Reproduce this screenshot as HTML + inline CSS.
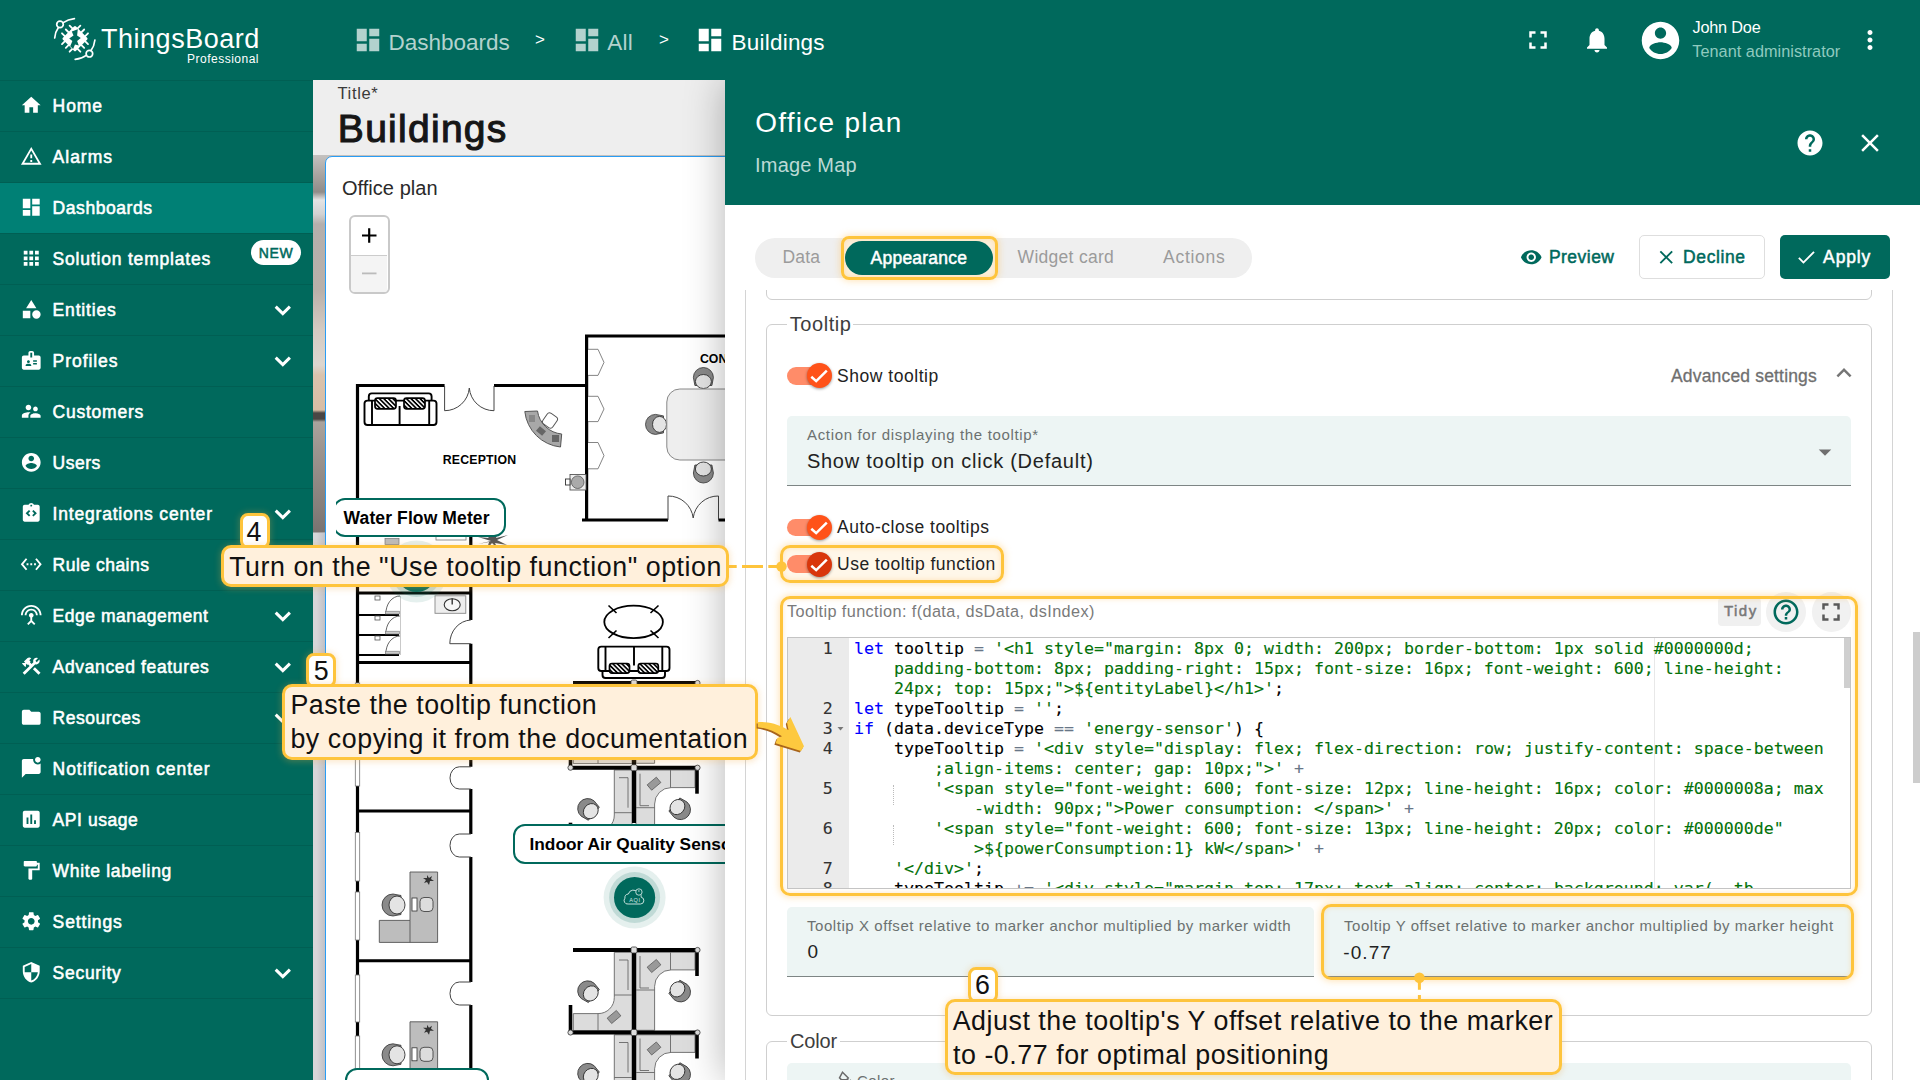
<!DOCTYPE html>
<html lang="en"><head><meta charset="utf-8"><title>ThingsBoard - Buildings</title>
<style>
*{box-sizing:border-box;margin:0;padding:0}
html,body{width:1920px;height:1080px;overflow:hidden;background:#fff;font-family:"Liberation Sans",sans-serif;color:#000}
.a{position:absolute}
.t{position:absolute;white-space:pre;display:block}
svg{position:absolute;overflow:visible}
#sidebar{left:0;top:0;width:313px;height:1080px;background:#00695c}
#topbar{left:313px;top:0;width:1607px;height:80px;background:#00695c}
.nl{left:0;width:313px;height:1px;background:#005f53}
#dash{left:313px;top:80px;width:412px;height:1000px;background:#eee;overflow:hidden}
#panel{left:725px;top:80px;width:1195px;height:1000px;background:#fff;box-shadow:0 0 38px rgba(0,0,0,.3);clip-path:inset(0 0 0 -70px)}
#phead{left:0;top:0;width:1195px;height:124.5px;background:#00695c}
.fs{border:1px solid #cfcfcf;border-radius:6px}
.field{background:#edf5f4;border-bottom:1px solid #7d8584;border-radius:5px 5px 0 0}
.hl{border:3.2px solid #fec43c;border-radius:10px;box-shadow:0 0 7px 1px rgba(254,190,85,.42), inset 0 0 5px rgba(254,190,85,.35)}
.note{background:#fff0dc;border:3.2px solid #fec43c;border-radius:10px;box-shadow:0 1px 6px 1px rgba(240,170,70,.28)}
.badge{background:#fff;border:3.2px solid #fec43c;border-radius:8px;box-shadow:0 0 6px 1px rgba(240,170,70,.28)}
.trk{height:17.5px;border-radius:9px;background:#ff8c69}
.thumb{width:25px;height:25px;border-radius:50%;background:#ff5219;box-shadow:0 1px 3px rgba(0,0,0,.4)}
.cd{-webkit-text-stroke:.12px;font-family:"DejaVu Sans Mono","Liberation Mono",monospace;font-size:16.61px;line-height:20px;color:#000}

</style></head>
<body>
<div id="sidebar" class="a">
<div class="a nl" style="top:80px"></div>
<svg class="a" style="left:20.05px;top:94.45px" width="22.5" height="22.5" viewBox="0 0 24 24" ><path fill="#fff" d="M10 20v-6h4v6h5v-8h3L12 3 2 12h3v8z"/></svg>
<span class="t " style="left:52.61px;top:96.00px;font-size:17.5px;line-height:21px;letter-spacing:0.896px;color:#fff;-webkit-text-stroke:.55px #fff;">Home</span>
<div class="a nl" style="top:131px"></div>
<svg class="a" style="left:20.05px;top:145.45px" width="22.5" height="22.5" viewBox="0 0 24 24" ><path fill="#fff" d="M12 5.99L19.53 19H4.47L12 5.99M12 2L1 21h22L12 2zm1 14h-2v2h2v-2zm0-6h-2v4h2v-4z"/></svg>
<span class="t " style="left:52.61px;top:147.00px;font-size:17.5px;line-height:21px;letter-spacing:0.984px;color:#fff;-webkit-text-stroke:.55px #fff;">Alarms</span>
<div class="a nl" style="top:182px"></div>
<div class="a" style="left:0;top:183px;width:313px;height:50px;background:#008075"></div>
<svg class="a" style="left:20.05px;top:196.45px" width="22.5" height="22.5" viewBox="0 0 24 24" ><path fill="#fff" d="M3 13h8V3H3v10zm0 8h8v-6H3v6zm10 0h8V11h-8v10zm0-18v6h8V3h-8z"/></svg>
<span class="t " style="left:52.61px;top:198.00px;font-size:17.5px;line-height:21px;letter-spacing:0.556px;color:#fff;-webkit-text-stroke:.55px #fff;">Dashboards</span>
<div class="a nl" style="top:233px"></div>
<svg class="a" style="left:20.05px;top:247.45px" width="22.5" height="22.5" viewBox="0 0 24 24" ><path fill="#fff" d="M4 8h4V4H4v4zm6 12h4v-4h-4v4zm-6 0h4v-4H4v4zm0-6h4v-4H4v4zm6 0h4v-4h-4v4zm6-10v4h4V4h-4zm-6 4h4V4h-4v4zm6 6h4v-4h-4v4zm0 6h4v-4h-4v4z"/></svg>
<span class="t " style="left:52.61px;top:249.00px;font-size:17.5px;line-height:21px;letter-spacing:0.805px;color:#fff;-webkit-text-stroke:.55px #fff;">Solution templates</span>
<div class="a nl" style="top:284px"></div>
<svg class="a" style="left:20.05px;top:298.45px" width="22.5" height="22.5" viewBox="0 0 24 24" ><path fill="#fff" d="M12 2l-5.5 9h11zM17.5 13a4.5 4.5 0 1 0 0 9 4.5 4.5 0 0 0 0-9zM3 13.5h8v8H3z"/></svg>
<span class="t " style="left:52.61px;top:300.00px;font-size:17.5px;line-height:21px;letter-spacing:0.826px;color:#fff;-webkit-text-stroke:.55px #fff;">Entities</span>
<svg class="a" style="left:270px;top:300.5px" width="26" height="20" viewBox="0 0 26 20"><path d="M5.7 5.6l7.1 7 7.1-7" fill="none" stroke="#fff" stroke-width="3"/></svg>
<div class="a nl" style="top:335px"></div>
<svg class="a" style="left:20.05px;top:349.45px" width="22.5" height="22.5" viewBox="0 0 24 24" ><path fill="#fff" d="M20 7h-5V4c0-1.1-.9-2-2-2h-2c-1.1 0-2 .9-2 2v3H4c-1.1 0-2 .9-2 2v11c0 1.1.9 2 2 2h16c1.1 0 2-.9 2-2V9c0-1.1-.9-2-2-2zM9 12c.83 0 1.5.67 1.5 1.5S9.83 15 9 15s-1.5-.67-1.5-1.5S8.17 12 9 12zm3 6H6v-.75c0-1 2-1.5 3-1.5s3 .5 3 1.5V18zm1-9h-2V4h2v5zm5 7.5h-4V15h4v1.5zm0-3h-4V12h4v1.5z"/></svg>
<span class="t " style="left:52.61px;top:351.00px;font-size:17.5px;line-height:21px;letter-spacing:0.931px;color:#fff;-webkit-text-stroke:.55px #fff;">Profiles</span>
<svg class="a" style="left:270px;top:351.5px" width="26" height="20" viewBox="0 0 26 20"><path d="M5.7 5.6l7.1 7 7.1-7" fill="none" stroke="#fff" stroke-width="3"/></svg>
<div class="a nl" style="top:386px"></div>
<svg class="a" style="left:20.05px;top:400.45px" width="22.5" height="22.5" viewBox="0 0 24 24" ><path fill="#fff" d="M16.5 12c1.38 0 2.49-1.12 2.49-2.5S17.88 7 16.5 7C15.12 7 14 8.12 14 9.5s1.12 2.5 2.5 2.5zM9 11c1.66 0 2.99-1.34 2.99-3S10.66 5 9 5C7.34 5 6 6.34 6 8s1.34 3 3 3zm7.5 3c-1.83 0-5.5.92-5.5 2.75V19h11v-2.25c0-1.83-3.67-2.75-5.5-2.75zM9 13c-2.33 0-7 1.17-7 3.5V19h7v-2.25c0-.85.33-2.34 2.37-3.47C10.5 13.1 9.66 13 9 13z"/></svg>
<span class="t " style="left:52.61px;top:402.00px;font-size:17.5px;line-height:21px;letter-spacing:0.758px;color:#fff;-webkit-text-stroke:.55px #fff;">Customers</span>
<div class="a nl" style="top:437px"></div>
<svg class="a" style="left:20.05px;top:451.45px" width="22.5" height="22.5" viewBox="0 0 24 24" ><path fill="#fff" d="M12 2C6.48 2 2 6.48 2 12s4.48 10 10 10 10-4.48 10-10S17.52 2 12 2zm0 3c1.66 0 3 1.34 3 3s-1.34 3-3 3-3-1.34-3-3 1.34-3 3-3zm0 14.2c-2.5 0-4.71-1.28-6-3.22.03-1.99 4-3.08 6-3.08 1.99 0 5.97 1.09 6 3.08-1.29 1.94-3.5 3.22-6 3.22z"/></svg>
<span class="t " style="left:52.61px;top:453.00px;font-size:17.5px;line-height:21px;letter-spacing:0.493px;color:#fff;-webkit-text-stroke:.55px #fff;">Users</span>
<div class="a nl" style="top:488px"></div>
<svg class="a" style="left:20.05px;top:502.45px" width="22.5" height="22.5" viewBox="0 0 24 24" ><path fill="#fff" d="M19 3h-4.18C14.4 1.84 13.3 1 12 1c-1.3 0-2.4.84-2.82 2H5c-1.1 0-2 .9-2 2v14c0 1.1.9 2 2 2h14c1.1 0 2-.9 2-2V5c0-1.1-.9-2-2-2zm-7 0c.55 0 1 .45 1 1s-.45 1-1 1-1-.45-1-1 .45-1 1-1zM11 14.17l-1.41 1.42L6 12l3.59-3.59L11 9.83 8.83 12 11 14.17zm3.41 1.42L13 14.17 15.17 12 13 9.83l1.41-1.42L18 12l-3.59 3.59z"/></svg>
<span class="t " style="left:52.61px;top:504.00px;font-size:17.5px;line-height:21px;letter-spacing:0.801px;color:#fff;-webkit-text-stroke:.55px #fff;">Integrations center</span>
<svg class="a" style="left:270px;top:504.5px" width="26" height="20" viewBox="0 0 26 20"><path d="M5.7 5.6l7.1 7 7.1-7" fill="none" stroke="#fff" stroke-width="3"/></svg>
<div class="a nl" style="top:539px"></div>
<svg class="a" style="left:20.05px;top:553.45px" width="22.5" height="22.5" viewBox="0 0 24 24" ><path fill="#fff" d="M7.77 6.76L6.23 5.48.82 12l5.41 6.52 1.54-1.28L3.42 12l4.35-5.24zM7 13h2v-2H7v2zm10-2h-2v2h2v-2zm-6 2h2v-2h-2v2zm6.77-7.52l-1.54 1.28L20.58 12l-4.35 5.24 1.54 1.28L23.18 12l-5.41-6.52z"/></svg>
<span class="t " style="left:52.61px;top:555.00px;font-size:17.5px;line-height:21px;letter-spacing:0.492px;color:#fff;-webkit-text-stroke:.55px #fff;">Rule chains</span>
<div class="a nl" style="top:590px"></div>
<svg class="a" style="left:20.05px;top:604.45px" width="22.5" height="22.5" viewBox="0 0 24 24" ><path fill="#fff" d="M12 5c-3.87 0-7 3.13-7 7h2c0-2.76 2.24-5 5-5s5 2.24 5 5h2c0-3.87-3.13-7-7-7zm1 9.29c.88-.39 1.5-1.26 1.5-2.29 0-1.38-1.12-2.5-2.5-2.5S9.5 10.620 9.500 12c0 1.020.62 1.900 1.500 2.290v3.300L7.590 21 9 22.410l3-3 3 3L16.410 21 13 17.590v-3.300zM12 1C5.930 1 1 5.930 1 12h2c0-4.970 4.030-9 9-9s9 4.030 9 9h2c0-6.070-4.930-11-11-11z"/></svg>
<span class="t " style="left:52.61px;top:606.00px;font-size:17.5px;line-height:21px;letter-spacing:0.520px;color:#fff;-webkit-text-stroke:.55px #fff;">Edge management</span>
<svg class="a" style="left:270px;top:606.5px" width="26" height="20" viewBox="0 0 26 20"><path d="M5.7 5.6l7.1 7 7.1-7" fill="none" stroke="#fff" stroke-width="3"/></svg>
<div class="a nl" style="top:641px"></div>
<svg class="a" style="left:20.05px;top:655.45px" width="22.5" height="22.5" viewBox="0 0 24 24" ><path fill="#fff" d="M13.783 15.172l2.121-2.121 5.996 5.996-2.121 2.121zM17.5 10c1.93 0 3.5-1.57 3.5-3.5 0-.58-.16-1.12-.41-1.6l-2.7 2.7-1.49-1.49 2.7-2.7c-.48-.25-1.02-.41-1.6-.41C15.57 3 14 4.57 14 6.5c0 .41.08.8.21 1.16l-1.85 1.85-1.78-1.78.71-.71-1.41-1.41L12 3.49c-1.17-1.17-3.07-1.17-4.24 0L4.220 7.030l1.410 1.410H2.810l-.71.71 3.540 3.540.71-.71V9.150l1.410 1.410.71-.71 1.780 1.780-7.410 7.410 2.120 2.120L16.340 9.790c.36.13.75.21 1.160.21z"/></svg>
<span class="t " style="left:52.61px;top:657.00px;font-size:17.5px;line-height:21px;letter-spacing:0.640px;color:#fff;-webkit-text-stroke:.55px #fff;">Advanced features</span>
<svg class="a" style="left:270px;top:657.5px" width="26" height="20" viewBox="0 0 26 20"><path d="M5.7 5.6l7.1 7 7.1-7" fill="none" stroke="#fff" stroke-width="3"/></svg>
<div class="a nl" style="top:692px"></div>
<svg class="a" style="left:20.05px;top:706.45px" width="22.5" height="22.5" viewBox="0 0 24 24" ><path fill="#fff" d="M10 4H4c-1.1 0-1.99.9-1.99 2L2 18c0 1.1.9 2 2 2h16c1.1 0 2-.9 2-2V8c0-1.1-.9-2-2-2h-8l-2-2z"/></svg>
<span class="t " style="left:52.61px;top:708.00px;font-size:17.5px;line-height:21px;letter-spacing:0.502px;color:#fff;-webkit-text-stroke:.55px #fff;">Resources</span>
<svg class="a" style="left:270px;top:708.5px" width="26" height="20" viewBox="0 0 26 20"><path d="M5.7 5.6l7.1 7 7.1-7" fill="none" stroke="#fff" stroke-width="3"/></svg>
<div class="a nl" style="top:743px"></div>
<svg class="a" style="left:20.05px;top:757.45px" width="22.5" height="22.5" viewBox="0 0 24 24" ><path fill="#fff" d="M22 6.98V16c0 1.1-.9 2-2 2H6l-4 4V4c0-1.1.9-2 2-2h10.100c-.06.32-.1.66-.1 1 0 2.760 2.240 5 5 5 1.130 0 2.160-.39 3-1.020zM16 3c0 1.660 1.340 3 3 3s3-1.340 3-3-1.340-3-3-3-3 1.340-3 3z"/></svg>
<span class="t " style="left:52.61px;top:759.00px;font-size:17.5px;line-height:21px;letter-spacing:0.933px;color:#fff;-webkit-text-stroke:.55px #fff;">Notification center</span>
<div class="a nl" style="top:794px"></div>
<svg class="a" style="left:20.05px;top:808.45px" width="22.5" height="22.5" viewBox="0 0 24 24" ><path fill="#fff" d="M19 3H5c-1.1 0-2 .9-2 2v14c0 1.1.9 2 2 2h14c1.1 0 2-.9 2-2V5c0-1.1-.9-2-2-2zM9 17H7v-7h2v7zm4 0h-2V7h2v10zm4 0h-2v-4h2v4z"/></svg>
<span class="t " style="left:52.61px;top:810.00px;font-size:17.5px;line-height:21px;letter-spacing:0.553px;color:#fff;-webkit-text-stroke:.55px #fff;">API usage</span>
<div class="a nl" style="top:845px"></div>
<svg class="a" style="left:20.05px;top:859.45px" width="22.5" height="22.5" viewBox="0 0 24 24" ><path fill="#fff" d="M18 4V3c0-.55-.45-1-1-1H5c-.55 0-1 .45-1 1v4c0 .55.45 1 1 1h12c.55 0 1-.45 1-1V6h1v4H9v11c0 .55.45 1 1 1h2c.55 0 1-.45 1-1v-9h8V4h-3z"/></svg>
<span class="t " style="left:52.61px;top:861.00px;font-size:17.5px;line-height:21px;letter-spacing:0.673px;color:#fff;-webkit-text-stroke:.55px #fff;">White labeling</span>
<div class="a nl" style="top:896px"></div>
<svg class="a" style="left:20.05px;top:910.45px" width="22.5" height="22.5" viewBox="0 0 24 24" ><path fill="#fff" d="M19.14 12.94c.04-.3.06-.61.06-.94 0-.32-.02-.64-.07-.94l2.030-1.580c.18-.14.23-.41.12-.61l-1.920-3.320c-.12-.22-.37-.29-.59-.22l-2.390.96c-.5-.38-1.030-.7-1.620-.94l-.36-2.540c-.04-.24-.24-.41-.48-.41h-3.840c-.24 0-.43.17-.47.41l-.36 2.540c-.59.24-1.130.57-1.620.94l-2.390-.96c-.22-.08-.47 0-.59.22L2.740 8.870c-.12.21-.08.47.12.61l2.030 1.580c-.05.3-.09.63-.09.94s.02.64.07.94l-2.030 1.580c-.18.14-.23.41-.12.61l1.920 3.320c.12.22.37.29.59.22l2.390-.96c.5.38 1.030.7 1.620.94l.36 2.540c.05.24.24.41.48.41h3.840c.24 0 .44-.17.47-.41l.36-2.540c.59-.24 1.130-.56 1.620-.94l2.390.96c.22.08.47 0 .59-.22l1.920-3.320c.12-.22.07-.47-.12-.61l-2.010-1.580zM12 15.600c-1.980 0-3.600-1.620-3.600-3.600s1.620-3.600 3.600-3.600 3.600 1.620 3.600 3.600-1.620 3.600-3.600 3.600z"/></svg>
<span class="t " style="left:52.61px;top:912.00px;font-size:17.5px;line-height:21px;letter-spacing:0.849px;color:#fff;-webkit-text-stroke:.55px #fff;">Settings</span>
<div class="a nl" style="top:947px"></div>
<svg class="a" style="left:20.05px;top:961.45px" width="22.5" height="22.5" viewBox="0 0 24 24" ><path fill="#fff" d="M12 1L3 5v6c0 5.550 3.840 10.740 9 12 5.160-1.260 9-6.450 9-12V5l-9-4zm0 10.990h7c-.53 4.120-3.280 7.790-7 8.940V12H5V6.300l7-3.110v8.800z"/></svg>
<span class="t " style="left:52.61px;top:963.00px;font-size:17.5px;line-height:21px;letter-spacing:0.708px;color:#fff;-webkit-text-stroke:.55px #fff;">Security</span>
<svg class="a" style="left:270px;top:963.5px" width="26" height="20" viewBox="0 0 26 20"><path d="M5.7 5.6l7.1 7 7.1-7" fill="none" stroke="#fff" stroke-width="3"/></svg>
<div class="a nl" style="top:998px"></div>
<div class="a" style="left:251px;top:240px;width:49.5px;height:25px;border-radius:12.5px;background:#fff"></div>
<span class="t " style="left:258.87px;top:245.00px;font-size:14px;line-height:17px;letter-spacing:0.544px;color:#00695c;-webkit-text-stroke:.5px #00695c;">NEW</span>
<svg class="a" style="left:50px;top:14px" width="50" height="50" viewBox="0 0 50 50">
<g fill="none" stroke="#fff" stroke-width="1.7" stroke-linecap="round">
<circle cx="10" cy="10.4" r="3.3"/><circle cx="39.4" cy="39.7" r="3.3"/>
<path d="M13.2 8.6 C16.5 6.3 20.5 5 24.4 4.6"/><path d="M8.4 13.6 C6.2 16.6 5 20.3 4.7 24"/>
<path d="M36.2 41.4 C33 43.8 29 45 25.2 45.4"/><path d="M41 36.6 C43.2 33.6 44.5 29.8 44.9 26"/>
</g>
<g transform="translate(25,24.7) rotate(45)">
<g stroke="#fff" stroke-width="1.8" stroke-linecap="round">
<path d="M-5.4 -13v26M0 -13v26M5.4 -13v26M-13 -5.4h26M-13 0h26M-13 5.4h26"/></g>
<rect x="-9.300" y="-9.300" width="18.600" height="18.600" rx="1.5" fill="#fff"/>
</g>
<path d="M27.800 15.200l-6 2.200 1.700 4-4.300 3.200 3.200 2.400-2.200 5.200 2.900 2.800 1.900-4.400 3.800 1-1.700-4.600 3.700-3-3.700-2.600z" fill="#00695c"/>
</svg>
<span class="t " style="left:101.08px;top:23.00px;font-size:27px;line-height:32px;letter-spacing:0.504px;color:#fff;">ThingsBoard</span>
<span class="t " style="left:187.06px;top:52.00px;font-size:12px;line-height:14px;letter-spacing:0.494px;color:#fff;">Professional</span>
</div>
<div id="topbar" class="a"></div>
<svg class="a" style="left:352.50px;top:24.90px" width="30" height="30" viewBox="0 0 24 24" ><path fill="#b3d2ce" d="M3 13h8V3H3v10zm0 8h8v-6H3v6zm10 0h8V11h-8v10zm0-18v6h8V3h-8z"/></svg>
<span class="t " style="left:388.59px;top:29.00px;font-size:22.5px;line-height:27px;letter-spacing:-0.023px;color:#b3d2ce;">Dashboards</span>
<span class="t " style="left:535.03px;top:30.00px;font-size:17px;line-height:20px;color:#fff;">&gt;</span>
<svg class="a" style="left:572.00px;top:24.90px" width="30" height="30" viewBox="0 0 24 24" ><path fill="#b3d2ce" d="M3 13h8V3H3v10zm0 8h8v-6H3v6zm10 0h8V11h-8v10zm0-18v6h8V3h-8z"/></svg>
<span class="t " style="left:607.19px;top:29.00px;font-size:22.5px;line-height:27px;letter-spacing:0.255px;color:#b3d2ce;">All</span>
<span class="t " style="left:659.03px;top:30.00px;font-size:17px;line-height:20px;color:#fff;">&gt;</span>
<svg class="a" style="left:695.40px;top:24.90px" width="30" height="30" viewBox="0 0 24 24" ><path fill="#fff" d="M3 13h8V3H3v10zm0 8h8v-6H3v6zm10 0h8V11h-8v10zm0-18v6h8V3h-8z"/></svg>
<span class="t " style="left:731.49px;top:29.00px;font-size:22.5px;line-height:27px;letter-spacing:0.227px;color:#fff;">Buildings</span>
<svg class="a" style="left:1522.50px;top:25.00px" width="30" height="30" viewBox="0 0 24 24" ><path fill="#fff" d="M7 14H5v5h5v-2H7v-3zm-2-4h2V7h3V5H5v5zm12 7h-3v2h5v-5h-2v3zM14 5v2h3v3h2V5h-5z"/></svg>
<svg class="a" style="left:1582.20px;top:25.20px" width="30" height="30" viewBox="0 0 24 24" ><path fill="#fff" d="M12 22c1.1 0 2-.9 2-2h-4c0 1.1.89 2 2 2zm6-6v-5c0-3.070-1.640-5.640-4.500-6.320V4c0-.83-.67-1.500-1.500-1.500s-1.500.67-1.500 1.500v.68C7.630 5.360 6 7.920 6 11v5l-2 2v1h16v-1l-2-2z"/></svg>
<svg class="a" style="left:1637.50px;top:18.20px" width="45" height="45" viewBox="0 0 24 24" ><path fill="#fff" d="M12 2C6.48 2 2 6.48 2 12s4.48 10 10 10 10-4.48 10-10S17.52 2 12 2zm0 3c1.66 0 3 1.34 3 3s-1.34 3-3 3-3-1.34-3-3 1.34-3 3-3zm0 14.2c-2.5 0-4.71-1.28-6-3.22.03-1.99 4-3.08 6-3.08 1.99 0 5.97 1.09 6 3.08-1.29 1.94-3.5 3.22-6 3.22z"/></svg>
<span class="t " style="left:1692.47px;top:17.00px;font-size:16.25px;line-height:20px;letter-spacing:-0.186px;color:#fff;">John Doe</span>
<span class="t " style="left:1692.27px;top:41.00px;font-size:16.25px;line-height:20px;letter-spacing:0.038px;color:#8fcabf;">Tenant administrator</span>
<svg class="a" style="left:1855.00px;top:25.00px" width="30" height="30" viewBox="0 0 24 24" ><path fill="#fff" d="M12 8c1.1 0 2-.9 2-2s-.9-2-2-2-2 .9-2 2 .9 2 2 2zm0 2c-1.1 0-2 .9-2 2s.9 2 2 2 2-.9 2-2-.9-2-2-2zm0 6c-1.1 0-2 .9-2 2s.9 2 2 2 2-.9 2-2-.9-2-2-2z"/></svg>
<div id="dash" class="a">
<div class="a" style="left:0;top:75px;width:412px;height:925px;background:linear-gradient(180deg,#c4c2c0 0px,#a8a4a0 20px,#908c89 37px,#e4e4e4 45px,#d2d2d2 59px,#b4afac 69px,#b9b0a9 135px,#d4cbc2 175px,#dcd6cf 210px,#d9c3ad 220px,#d8bda4 255px,#4a4644 258px,#4a4644 264px,#aaa39d 267px,#9f9791 290px,#857e7a 355px,#7a7370 377px,#d6d6d8 378px,#d6d6d8 925px)"></div>
<div class="a" style="left:0;top:453px;width:12px;height:547px;background:linear-gradient(90deg,rgba(0,0,40,0) 30%,rgba(0,0,40,.1))"></div>
<div class="a" style="left:12px;top:76px;width:420px;height:940px;background:#fff;border:1px solid #2a9df4;border-radius:7px"></div>
</div>
<span class="t " style="left:337.46px;top:83.00px;font-size:16.5px;line-height:20px;letter-spacing:0.660px;color:#3a3a3a;">Title*</span>
<span class="t " style="left:337.85px;top:105.00px;font-size:39px;line-height:47px;letter-spacing:1.279px;color:#161616;-webkit-text-stroke:1.1px #161616;">Buildings</span>
<span class="t " style="left:341.90px;top:176.00px;font-size:20px;line-height:24px;letter-spacing:0.045px;color:#2a2a2a;">Office plan</span>
<div class="a" style="left:349px;top:215px;width:41px;height:79px;border:2px solid #c9c9c9;border-radius:6px;background:#fff;overflow:hidden"><div class="a" style="left:0;top:37.5px;width:36px;height:1px;background:#ccc"></div><div class="a" style="left:0;top:38.5px;width:36px;height:37px;background:#f4f4f4"></div></div>
<svg class="a" style="left:349px;top:214.800px" width="40" height="78.5"><path d="M13 20.5h14.5M20.2 13.2v14.600" stroke="#000" stroke-width="2.200" fill="none"/><path d="M13 58.400h14.500" stroke="#bbb" stroke-width="1.800"/></svg>
<svg class="a" style="left:326px;top:157px" width="399" height="923" viewBox="326 157 399 923"><g><path stroke="#000" stroke-width="3.200" fill="none" d="M357.500 384v700M356 385.500h88.600M494 385.500h94M586.600 334.500v187M585 336h150M582 520h86M718.500 520h10M470.800 537v83M470.800 643.700v123M470.800 789v45M470.800 857v125M470.800 1005v80"/>
<path stroke="#000" stroke-width="3" fill="none" d="M357.500 593h113.300M357.500 662.500h113.300M357.500 811h113.300M357.500 960.700h113.300"/>
<rect x="385" y="538.500" width="14" height="6" fill="#bbb" stroke="#777" stroke-width=".7"/><rect x="436" y="533" width="30" height="7" fill="#fff" stroke="#777" stroke-width=".8"/>
<rect x="355.300" y="683.0" width="4.400" height="103.0" fill="#fff" stroke="#777" stroke-width=".8"/>
<rect x="355.300" y="832.5" width="4.400" height="48.5" fill="#fff" stroke="#777" stroke-width=".8"/>
<rect x="355.300" y="892.0" width="4.400" height="48.0" fill="#fff" stroke="#777" stroke-width=".8"/>
<rect x="355.300" y="975.0" width="4.400" height="47.0" fill="#fff" stroke="#777" stroke-width=".8"/>
<rect x="355.300" y="1036.0" width="4.400" height="44.0" fill="#fff" stroke="#777" stroke-width=".8"/>
<g stroke="#000" stroke-width="1.900" fill="#fff"><rect x="368.800" y="393.400" width="62.800" height="9" rx="3"/><rect x="364.500" y="400.600" width="72" height="24.400" rx="3"/><path d="M372 400.600v24.400M429.200 400.600v24.400M399.600 406v19" fill="none"/></g>
<defs><pattern id="hat" width="3.200" height="3.200" patternUnits="userSpaceOnUse" patternTransform="rotate(45)"><rect width="3.200" height="3.200" fill="#fff"/><rect width="3.200" height="1.700" fill="#000"/></pattern></defs>
<rect x="375" y="398.200" width="21" height="10.600" rx="2.500" fill="url(#hat)" stroke="#000" stroke-width="1.700"/><rect x="404" y="398.200" width="21" height="10.600" rx="2.500" fill="url(#hat)" stroke="#000" stroke-width="1.700"/>
<path stroke="#444" stroke-width="1" fill="none" d="M444.600 386v24.700M494 386v24.700M444.600 410.700A24.700 24.700 0 0 0 469.300 388M494 410.700A24.700 24.700 0 0 1 469.300 388"/>
<path stroke="#444" stroke-width="1" fill="none" d="M668 520v-24M718.500 520v-24M668 496A25 25 0 0 1 693.200 518M718.500 496A25 25 0 0 0 693.200 518"/>
<path d="M524.800 411.500A40 40 0 0 0 560.500 447l1.200-13A27 27 0 0 1 537.500 411z" fill="#a8a8a8" stroke="#555" stroke-width="1"/>
<rect x="-6" y="-6.500" width="12" height="13" rx="3" transform="translate(550,420.500) rotate(35)" fill="#fff" stroke="#555" stroke-width="1"/>
<rect x="529" y="415" width="6" height="7" fill="#888"/><rect x="-4" y="-3" width="8" height="6" transform="translate(541,431) rotate(40)" fill="#666"/><rect x="552" y="435" width="7" height="7" fill="#666"/>
<path d="M588 349.3h10l6 13.1l-6 13.0h-10" fill="#fff" stroke="#777" stroke-width=".9"/>
<path d="M588 396.3h10l6 12.7l-6 12.6h-10" fill="#fff" stroke="#777" stroke-width=".9"/>
<path d="M588 442.5h10l6 13.1l-6 13.2h-10" fill="#fff" stroke="#777" stroke-width=".9"/>
<g transform="translate(703.4,380.5) rotate(0)"><path d="M-10.0 -3A10.0 10.0 0 0 1 10.0 -3L8.5 5H-8.5z" fill="#8a8a8a" stroke="#333" stroke-width=".8"/><ellipse cx="0" cy="1" rx="8.0" ry="7.0" fill="#e4e4e4" stroke="#333" stroke-width=".9"/></g>
<g transform="translate(703.4,470.0) rotate(180)"><path d="M-10.0 -3A10.0 10.0 0 0 1 10.0 -3L8.5 5H-8.5z" fill="#8a8a8a" stroke="#333" stroke-width=".8"/><ellipse cx="0" cy="1" rx="8.0" ry="7.0" fill="#e4e4e4" stroke="#333" stroke-width=".9"/></g>
<g transform="translate(658.5,424.4) rotate(-90)"><path d="M-10.0 -3A10.0 10.0 0 0 1 10.0 -3L8.5 5H-8.5z" fill="#8a8a8a" stroke="#333" stroke-width=".8"/><ellipse cx="0" cy="1" rx="8.0" ry="7.0" fill="#e4e4e4" stroke="#333" stroke-width=".9"/></g>
<rect x="666.800" y="389" width="90" height="71" rx="13" fill="#eee" stroke="#888" stroke-width="1"/>
<rect x="570" y="474.500" width="16" height="15.500" fill="#eee" stroke="#555" stroke-width=".9"/><circle cx="577.700" cy="482.200" r="6.300" fill="#aaa" stroke="#555" stroke-width=".8"/><rect x="565.500" y="479" width="4.500" height="6" fill="#fff" stroke="#333" stroke-width=".9"/>
<path d="M491 541l-13-4 11 1-8-7 10 6-1-8 3 8 6-7-3 8 12-3-11 5 10 5-12-2 3 6-6-6-5 6 2-7-11 2z" fill="#555"/>
<path d="M358 615h41" stroke="#000" stroke-width="1.800"/>
<path d="M386 614A14 17 0 0 1 400 596" fill="none" stroke="#555" stroke-width=".9"/><rect x="385.500" y="611.2" width="14" height="2.800" fill="#ccc" stroke="#777" stroke-width=".6"/>
<rect x="375" y="596" width="5" height="4" fill="#fff" stroke="#555" stroke-width=".8"/>
<path d="M358 635h41" stroke="#000" stroke-width="1.800"/>
<path d="M386 634A14 17 0 0 1 400 616" fill="none" stroke="#555" stroke-width=".9"/><rect x="385.500" y="631.2" width="14" height="2.800" fill="#ccc" stroke="#777" stroke-width=".6"/>
<rect x="375" y="616" width="5" height="4" fill="#fff" stroke="#555" stroke-width=".8"/>
<path d="M358 655h41" stroke="#000" stroke-width="1.800"/>
<path d="M386 654A14 17 0 0 1 400 636" fill="none" stroke="#555" stroke-width=".9"/><rect x="385.500" y="651.2" width="14" height="2.800" fill="#ccc" stroke="#777" stroke-width=".6"/>
<rect x="375" y="636" width="5" height="4" fill="#fff" stroke="#555" stroke-width=".8"/>
<path d="M400.5 596v59" stroke="#bbb" stroke-width=".8"/>
<rect x="435" y="595.800" width="30.800" height="17.500" fill="#eee" stroke="#888" stroke-width=".9"/><ellipse cx="452.200" cy="604.800" rx="8" ry="6" fill="#f6f6f6" stroke="#333" stroke-width="1.100"/><path d="M452.200 598.500v6" stroke="#333" stroke-width="1.400"/>
<path stroke="#444" stroke-width="1" fill="none" d="M470.800 643.700h-21A22 23.700 0 0 1 470.800 620"/>
<path stroke="#444" stroke-width="1" fill="none" d="M470.800 766.8h-11.500A9.300 11.1 0 0 0 459.300 789.0H470.800"/>
<path stroke="#444" stroke-width="1" fill="none" d="M470.800 834.0h-11.500A9.300 11.5 0 0 0 459.300 857.0H470.800"/>
<path stroke="#444" stroke-width="1" fill="none" d="M470.800 982.0h-11.500A9.300 11.5 0 0 0 459.300 1005.0H470.800"/>
<ellipse cx="633.600" cy="621.900" rx="29.300" ry="16.200" fill="#fff" stroke="#000" stroke-width="1.800"/>
<path d="M608.500 605.500l8 7.500M658.500 605.500l-8 7.500M608.500 638l8-7.500M658.500 638l-8-7.500" stroke="#000" stroke-width="1.600"/>
<g stroke="#000" stroke-width="1.900" fill="#fff"><rect x="602.500" y="668" width="62.500" height="10" rx="3"/><rect x="598.300" y="646.600" width="71.200" height="24.400" rx="3"/><path d="M605.500 646.600v24.400M662.300 646.600v24.400M634 646.600v19" fill="none"/></g>
<rect x="609.500" y="663.500" width="20" height="9.600" rx="2.500" fill="url(#hat)" stroke="#000" stroke-width="1.700"/><rect x="638.300" y="663.500" width="20" height="9.600" rx="2.500" fill="url(#hat)" stroke="#000" stroke-width="1.700"/>
<path d="M410 872.0h27.600v70.400H379.300v-22H410z" fill="#bdbdbd" stroke="#555" stroke-width=".9"/><path d="M410 920.4v22" stroke="#555" stroke-width=".9"/><g transform="translate(396.0,905.0) rotate(-90)"><path d="M-11.0 -3A11.0 11.0 0 0 1 11.0 -3L9.5 5H-9.5z" fill="#8a8a8a" stroke="#333" stroke-width=".8"/><ellipse cx="0" cy="1" rx="9.0" ry="8.0" fill="#e4e4e4" stroke="#333" stroke-width=".9"/></g><rect x="412" y="898.0" width="5" height="13" fill="#fff" stroke="#333" stroke-width=".8"/><rect x="420" y="897.5" width="13" height="14" rx="4" fill="#ddd" stroke="#333" stroke-width=".8"/><path d="M427 875.0l2 3 3-2-1 3 3 2-4 0-1 4-2-3-3 1 2-3-3-2 4 0z" fill="#333"/>
<path d="M410 1021.8h27.600v70.400H379.300v-22H410z" fill="#bdbdbd" stroke="#555" stroke-width=".9"/><path d="M410 1070.2v22" stroke="#555" stroke-width=".9"/><g transform="translate(396.0,1054.8) rotate(-90)"><path d="M-11.0 -3A11.0 11.0 0 0 1 11.0 -3L9.5 5H-9.5z" fill="#8a8a8a" stroke="#333" stroke-width=".8"/><ellipse cx="0" cy="1" rx="9.0" ry="8.0" fill="#e4e4e4" stroke="#333" stroke-width=".9"/></g><rect x="412" y="1047.8" width="5" height="13" fill="#fff" stroke="#333" stroke-width=".8"/><rect x="420" y="1047.3" width="13" height="14" rx="4" fill="#ddd" stroke="#333" stroke-width=".8"/><path d="M427 1024.8l2 3 3-2-1 3 3 2-4 0-1 4-2-3-3 1 2-3-3-2 4 0z" fill="#333"/>
<path fill="#dcdcdc" stroke="#666" stroke-width=".9" d="M636 685.3h59v17.600h-24A16.400 16.400 0 0 0 654.600 719.3V763.3H636z"/><path d="M670.500 685.3v17.600M636 723.0h18.600M640 689.0v32h9" fill="none" stroke="#666" stroke-width=".9"/><rect x="-6" y="-3.500" width="12" height="7" transform="translate(654,699.0) rotate(-40)" fill="#999" stroke="#555" stroke-width=".7"/><g transform="translate(678.2,723.0) rotate(130)"><path d="M-10.0 -3A10.0 10.0 0 0 1 10.0 -3L8.5 5H-8.5z" fill="#8a8a8a" stroke="#333" stroke-width=".8"/><ellipse cx="0" cy="1" rx="8.0" ry="7.0" fill="#e4e4e4" stroke="#333" stroke-width=".9"/></g><path d="M697 683.0v26" stroke="#000" stroke-width="3.600"/><path fill="#dcdcdc" stroke="#666" stroke-width=".9" d="M632 685.3h-17.700v45A16 16 0 0 1 598 746.6H573.300v17H632z"/><path d="M598 746.6v17M614.300 728.0h17.700M628 723.0v-30h-9" fill="none" stroke="#666" stroke-width=".9"/><rect x="-6" y="-3.500" width="12" height="7" transform="translate(614,750.0) rotate(-40)" fill="#999" stroke="#555" stroke-width=".7"/><g transform="translate(590.0,725.8) rotate(-50)"><path d="M-10.0 -3A10.0 10.0 0 0 1 10.0 -3L8.5 5H-8.5z" fill="#8a8a8a" stroke="#333" stroke-width=".8"/><ellipse cx="0" cy="1" rx="8.0" ry="7.0" fill="#e4e4e4" stroke="#333" stroke-width=".9"/></g><path d="M570.500 738.0v27.500" stroke="#000" stroke-width="3.600"/>
<path fill="#dcdcdc" stroke="#666" stroke-width=".9" d="M636 770.0h59v17.600h-24A16.400 16.400 0 0 0 654.600 804.0V848.0H636z"/><path d="M670.500 770.0v17.600M636 807.7h18.600M640 773.7v32h9" fill="none" stroke="#666" stroke-width=".9"/><rect x="-6" y="-3.500" width="12" height="7" transform="translate(654,783.7) rotate(-40)" fill="#999" stroke="#555" stroke-width=".7"/><g transform="translate(678.2,807.7) rotate(130)"><path d="M-10.0 -3A10.0 10.0 0 0 1 10.0 -3L8.5 5H-8.5z" fill="#8a8a8a" stroke="#333" stroke-width=".8"/><ellipse cx="0" cy="1" rx="8.0" ry="7.0" fill="#e4e4e4" stroke="#333" stroke-width=".9"/></g><path d="M697 767.7v26" stroke="#000" stroke-width="3.600"/><path fill="#dcdcdc" stroke="#666" stroke-width=".9" d="M632 770.0h-17.700v45A16 16 0 0 1 598 831.3H573.300v17H632z"/><path d="M598 831.3v17M614.300 812.7h17.700M628 807.7v-30h-9" fill="none" stroke="#666" stroke-width=".9"/><rect x="-6" y="-3.500" width="12" height="7" transform="translate(614,834.7) rotate(-40)" fill="#999" stroke="#555" stroke-width=".7"/><g transform="translate(590.0,810.5) rotate(-50)"><path d="M-10.0 -3A10.0 10.0 0 0 1 10.0 -3L8.5 5H-8.5z" fill="#8a8a8a" stroke="#333" stroke-width=".8"/><ellipse cx="0" cy="1" rx="8.0" ry="7.0" fill="#e4e4e4" stroke="#333" stroke-width=".9"/></g><path d="M570.500 822.7v27.500" stroke="#000" stroke-width="3.600"/>
<path fill="#dcdcdc" stroke="#666" stroke-width=".9" d="M636 952.3h59v17.600h-24A16.400 16.400 0 0 0 654.600 986.3V1030.3H636z"/><path d="M670.500 952.3v17.600M636 990.0h18.600M640 956.0v32h9" fill="none" stroke="#666" stroke-width=".9"/><rect x="-6" y="-3.500" width="12" height="7" transform="translate(654,966.0) rotate(-40)" fill="#999" stroke="#555" stroke-width=".7"/><g transform="translate(678.2,990.0) rotate(130)"><path d="M-10.0 -3A10.0 10.0 0 0 1 10.0 -3L8.5 5H-8.5z" fill="#8a8a8a" stroke="#333" stroke-width=".8"/><ellipse cx="0" cy="1" rx="8.0" ry="7.0" fill="#e4e4e4" stroke="#333" stroke-width=".9"/></g><path d="M697 950.0v26" stroke="#000" stroke-width="3.600"/><path fill="#dcdcdc" stroke="#666" stroke-width=".9" d="M632 952.3h-17.700v45A16 16 0 0 1 598 1013.6H573.300v17H632z"/><path d="M598 1013.6v17M614.300 995.0h17.700M628 990.0v-30h-9" fill="none" stroke="#666" stroke-width=".9"/><rect x="-6" y="-3.500" width="12" height="7" transform="translate(614,1017.0) rotate(-40)" fill="#999" stroke="#555" stroke-width=".7"/><g transform="translate(590.0,992.8) rotate(-50)"><path d="M-10.0 -3A10.0 10.0 0 0 1 10.0 -3L8.5 5H-8.5z" fill="#8a8a8a" stroke="#333" stroke-width=".8"/><ellipse cx="0" cy="1" rx="8.0" ry="7.0" fill="#e4e4e4" stroke="#333" stroke-width=".9"/></g><path d="M570.500 1005.0v27.500" stroke="#000" stroke-width="3.600"/>
<path fill="#dcdcdc" stroke="#666" stroke-width=".9" d="M636 1034.8h59v17.600h-24A16.400 16.400 0 0 0 654.600 1068.8V1112.8H636z"/><path d="M670.500 1034.8v17.600M636 1072.5h18.600M640 1038.5v32h9" fill="none" stroke="#666" stroke-width=".9"/><rect x="-6" y="-3.500" width="12" height="7" transform="translate(654,1048.5) rotate(-40)" fill="#999" stroke="#555" stroke-width=".7"/><g transform="translate(678.2,1072.5) rotate(130)"><path d="M-10.0 -3A10.0 10.0 0 0 1 10.0 -3L8.5 5H-8.5z" fill="#8a8a8a" stroke="#333" stroke-width=".8"/><ellipse cx="0" cy="1" rx="8.0" ry="7.0" fill="#e4e4e4" stroke="#333" stroke-width=".9"/></g><path d="M697 1032.5v26" stroke="#000" stroke-width="3.600"/><path fill="#dcdcdc" stroke="#666" stroke-width=".9" d="M632 1034.8h-17.700v45A16 16 0 0 1 598 1096.1H573.300v17H632z"/><path d="M598 1096.1v17M614.300 1077.5h17.700M628 1072.5v-30h-9" fill="none" stroke="#666" stroke-width=".9"/><rect x="-6" y="-3.500" width="12" height="7" transform="translate(614,1099.5) rotate(-40)" fill="#999" stroke="#555" stroke-width=".7"/><g transform="translate(590.0,1075.3) rotate(-50)"><path d="M-10.0 -3A10.0 10.0 0 0 1 10.0 -3L8.5 5H-8.5z" fill="#8a8a8a" stroke="#333" stroke-width=".8"/><ellipse cx="0" cy="1" rx="8.0" ry="7.0" fill="#e4e4e4" stroke="#333" stroke-width=".9"/></g><path d="M570.500 1087.5v27.500" stroke="#000" stroke-width="3.600"/>
<path d="M573 683h125M569.600 767.700h128.400M573 950h125M569 1032.500h129M634 683v140M634 950v135" stroke="#000" stroke-width="4" fill="none"/>
<rect x="631.0" y="680.0" width="6" height="6" rx="1.500" fill="#ddd" stroke="#333" stroke-width=".8"/>
<rect x="631.0" y="764.7" width="6" height="6" rx="1.500" fill="#ddd" stroke="#333" stroke-width=".8"/>
<rect x="631.0" y="947.0" width="6" height="6" rx="1.500" fill="#ddd" stroke="#333" stroke-width=".8"/>
<rect x="631.0" y="1029.5" width="6" height="6" rx="1.500" fill="#ddd" stroke="#333" stroke-width=".8"/>
<circle cx="697.5" cy="683.0" r="2.600" fill="#ddd" stroke="#333" stroke-width=".8"/>
<circle cx="697.5" cy="767.7" r="2.600" fill="#ddd" stroke="#333" stroke-width=".8"/>
<circle cx="697.5" cy="950.0" r="2.600" fill="#ddd" stroke="#333" stroke-width=".8"/>
<circle cx="697.5" cy="1032.5" r="2.600" fill="#ddd" stroke="#333" stroke-width=".8"/>
<circle cx="570.5" cy="767.7" r="2.600" fill="#ddd" stroke="#333" stroke-width=".8"/>
<circle cx="570.5" cy="1032.5" r="2.600" fill="#ddd" stroke="#333" stroke-width=".8"/>
<circle cx="416.5" cy="571.5" r="31" fill="rgba(0,105,92,.1)"/><circle cx="416.5" cy="571.5" r="25.500" fill="rgba(0,105,92,.16)"/><circle cx="416.5" cy="571.5" r="20.600" fill="#00695c"/>
<circle cx="634.6" cy="897.5" r="31" fill="rgba(0,105,92,.1)"/><circle cx="634.6" cy="897.5" r="25.500" fill="rgba(0,105,92,.16)"/><circle cx="634.6" cy="897.5" r="20.600" fill="#00695c"/>
<g transform="translate(634.600,898) scale(.8) translate(-634.600,-898)"><path d="M626.500 905.500h15.500a4.300 4.300 0 0 0 .8-8.500 5 5 0 0 0-4-5.500 6.500 6.500 0 0 0-12 1.500 4.800 4.800 0 0 0-4.300 5.300 4.400 4.400 0 0 0 4 7.200z" fill="none" stroke="#cfe6e2" stroke-width="1.200"/><circle cx="640" cy="890.500" r="4" fill="#00695c" stroke="#cfe6e2" stroke-width="1.100"/><path d="M640 890.500v-2.500" stroke="#cfe6e2" stroke-width="1"/></g>
<text x="629.200" y="902.300" font-family="Liberation Sans, sans-serif" font-size="5.600" fill="#cfe6e2" textLength="10.800">AQI</text></g></svg>
<span class="t " style="left:442.65px;top:453.00px;font-size:12.3px;line-height:15px;letter-spacing:0.220px;font-weight:700;">RECEPTION</span>
<div class="a" style="left:700px;top:340px;width:25px;height:40px;overflow:hidden"><span class="t " style="left:-0.05px;top:12.00px;font-size:12.3px;line-height:15px;font-weight:700;">CONFERENCE</span></div>
<div class="a" style="left:336px;top:497px;width:172px;height:43px;overflow:hidden"><div class="a" style="left:-3px;top:.8px;width:172.500px;height:39.300px;border:2.200px solid #00695c;border-radius:12px;background:#fff"></div></div>
<span class="t " style="left:343.61px;top:508.00px;font-size:17.5px;line-height:21px;letter-spacing:0.109px;font-weight:700;">Water Flow Meter</span>
<div class="a" style="left:505px;top:820px;width:220px;height:50px;overflow:hidden"><div class="a" style="left:8px;top:4.200px;width:260px;height:39.400px;border:2.200px solid #00695c;border-radius:12px;background:#fff"></div><span class="t " style="left:24.52px;top:14.00px;font-size:17.3px;line-height:21px;font-weight:700;">Indoor Air Quality Sensor</span></div>
<div class="a" style="left:345px;top:1067.600px;width:144px;height:40px;border:2.200px solid #00695c;border-radius:12px;background:#fff"></div>
<div id="panel" class="a"><div id="phead" class="a"></div></div>
<span class="t " style="left:755.14px;top:106.00px;font-size:28px;line-height:34px;letter-spacing:1.278px;color:#fff;">Office plan</span>
<span class="t " style="left:755.10px;top:153.00px;font-size:20px;line-height:24px;letter-spacing:0.180px;color:#bcd9d5;">Image Map</span>
<svg class="a" style="left:1795.00px;top:128.00px" width="30" height="30" viewBox="0 0 24 24" ><path fill="#fff" d="M12 2C6.48 2 2 6.48 2 12s4.48 10 10 10 10-4.48 10-10S17.52 2 12 2zm1 17h-2v-2h2v2zm2.070-7.750l-.9.92C13.450 12.900 13 13.500 13 15h-2v-.5c0-1.1.45-2.100 1.170-2.830l1.240-1.260c.37-.36.59-.86.59-1.410 0-1.1-.9-2-2-2s-2 .9-2 2H8c0-2.210 1.790-4 4-4s4 1.790 4 4c0 .88-.36 1.680-.93 2.250z"/></svg>
<svg class="a" style="left:1855.30px;top:128.20px" width="30" height="30" viewBox="0 0 24 24" ><path fill="#fff" d="M19 6.41L17.59 5 12 10.59 6.41 5 5 6.41 10.59 12 5 17.59 6.41 19 12 13.41 17.59 19 19 17.59 13.41 12z"/></svg>
<div class="a" style="left:755px;top:238px;width:496.500px;height:39.500px;border-radius:20px;background:#efefef"></div>
<div class="a hl" style="left:840.500px;top:235.500px;width:157px;height:44px;background:rgba(255,240,215,.8);border-radius:8px"></div>
<div class="a" style="left:845px;top:240.500px;width:148px;height:34.500px;border-radius:17.300px;background:#00695c"></div>
<span class="t " style="left:782.41px;top:247.00px;font-size:17.5px;line-height:21px;letter-spacing:0.202px;color:#9b9b9b;">Data</span>
<span class="t " style="left:870.61px;top:248.00px;font-size:17.5px;line-height:21px;letter-spacing:0.220px;color:#fff;-webkit-text-stroke:.5px #fff;">Appearance</span>
<span class="t " style="left:1017.61px;top:247.00px;font-size:17.5px;line-height:21px;letter-spacing:0.280px;color:#9b9b9b;">Widget card</span>
<span class="t " style="left:1163.01px;top:247.00px;font-size:17.5px;line-height:21px;letter-spacing:0.731px;color:#9b9b9b;">Actions</span>
<svg class="a" style="left:1520.05px;top:245.55px" width="22.5" height="22.5" viewBox="0 0 24 24" ><path fill="#00695c" d="M12 4.5C7 4.500 2.730 7.610 1 12c1.730 4.390 6 7.500 11 7.500s9.270-3.110 11-7.500c-1.730-4.390-6-7.500-11-7.500zM12 17c-2.760 0-5-2.240-5-5s2.240-5 5-5 5 2.240 5 5-2.240 5-5 5zm0-8c-1.660 0-3 1.340-3 3s1.340 3 3 3 3-1.340 3-3-1.340-3-3-3z"/></svg>
<span class="t " style="left:1548.91px;top:247.00px;font-size:17.5px;line-height:21px;letter-spacing:0.471px;color:#00695c;-webkit-text-stroke:.5px #00695c;">Preview</span>
<div class="a" style="left:1639.300px;top:235px;width:125.400px;height:44px;border:1px solid #dedede;border-radius:5px"></div>
<svg class="a" style="left:1654.55px;top:245.75px" width="22.5" height="22.5" viewBox="0 0 24 24" ><path fill="#00695c" d="M19 6.41L17.59 5 12 10.59 6.41 5 5 6.41 10.59 12 5 17.59 6.41 19 12 13.41 17.59 19 19 17.59 13.41 12z"/></svg>
<span class="t " style="left:1683.11px;top:247.00px;font-size:17.5px;line-height:21px;letter-spacing:0.583px;color:#00695c;-webkit-text-stroke:.5px #00695c;">Decline</span>
<div class="a" style="left:1780px;top:235px;width:110px;height:44px;background:#00695c;border-radius:5px"></div>
<svg class="a" style="left:1794.95px;top:245.75px" width="22.5" height="22.5" viewBox="0 0 24 24" ><path fill="#fff" d="M9 16.17L4.83 12l-1.42 1.41L9 19 21 7l-1.41-1.41z"/></svg>
<span class="t " style="left:1823.11px;top:247.00px;font-size:17.5px;line-height:21px;letter-spacing:0.848px;color:#fff;-webkit-text-stroke:.5px #fff;">Apply</span>
<div class="a" style="left:745.300px;top:290px;width:1px;height:790px;background:#d4d4d4"></div>
<div class="a" style="left:1892px;top:290px;width:1px;height:790px;background:#d4d4d4"></div>
<div class="a" style="left:1913px;top:632px;width:7px;height:151px;background:#cdcdcd"></div>
<div class="a" style="left:760px;top:290px;width:1120px;height:12px;overflow:hidden"><div class="a fs" style="left:6px;top:-40px;width:1106px;height:50px"></div></div>
<div class="a fs" style="left:766px;top:324px;width:1106px;height:691.500px"></div>
<div class="a" style="left:787px;top:318px;width:66px;height:14px;background:#fff"></div>
<span class="t " style="left:789.70px;top:312.00px;font-size:20px;line-height:24px;letter-spacing:0.565px;color:#3d3d3d;">Tooltip</span>
<div class="a trk" style="left:787px;top:367.0px;width:38px"></div><div class="a thumb" style="left:807.300px;top:363.4px;"></div><svg class="a" style="left:807.300px;top:363.4px" width="25" height="25"><path d="M4.300 13.700l4.900 4.400 10.600-10.500" fill="none" stroke="#fff" stroke-width="2.500"/></svg>
<span class="t " style="left:837.01px;top:366.00px;font-size:17.5px;line-height:21px;letter-spacing:0.539px;color:#222;">Show tooltip</span>
<span class="t " style="left:1671.01px;top:366.00px;font-size:17.5px;line-height:21px;letter-spacing:0.172px;color:#6f6f6f;-webkit-text-stroke:.3px #6f6f6f;">Advanced settings</span>
<svg class="a" style="left:1828.60px;top:358.40px" width="30" height="30" viewBox="0 0 24 24" ><path fill="#757575" d="M12 8l-6 6 1.41 1.41L12 10.83l4.59 4.58L18 14z"/></svg>
<div class="a field" style="left:787px;top:416.300px;width:1064px;height:69.500px"></div>
<span class="t " style="left:807.03px;top:426.00px;font-size:15px;line-height:18px;letter-spacing:0.662px;color:#6b7170;">Action for displaying the tooltip*</span>
<span class="t " style="left:806.90px;top:449.00px;font-size:20px;line-height:24px;letter-spacing:0.752px;color:#222;">Show tooltip on click (Default)</span>
<svg class="a" style="left:1810.00px;top:437.20px" width="30" height="30" viewBox="0 0 24 24" ><path fill="#6f6f6f" d="M7 10l5 5 5-5z"/></svg>
<div class="a trk" style="left:787px;top:518.5px;width:38px"></div><div class="a thumb" style="left:807.300px;top:515.0px;"></div><svg class="a" style="left:807.300px;top:515.0px" width="25" height="25"><path d="M4.300 13.700l4.900 4.400 10.600-10.500" fill="none" stroke="#fff" stroke-width="2.500"/></svg>
<span class="t " style="left:837.01px;top:517.00px;font-size:17.5px;line-height:21px;letter-spacing:0.499px;color:#222;">Auto-close tooltips</span>
<div class="a hl" style="left:779.800px;top:545px;width:224.700px;height:38.300px;background:rgba(255,240,215,.55)"></div>
<div class="a trk" style="left:787px;top:555.0px;width:38px"></div><div class="a thumb" style="left:807.300px;top:551.5px;background:#d9360b;"></div><svg class="a" style="left:807.300px;top:551.5px" width="25" height="25"><path d="M4.300 13.700l4.900 4.400 10.600-10.500" fill="none" stroke="#fff" stroke-width="2.500"/></svg>
<span class="t " style="left:837.01px;top:554.00px;font-size:17.5px;line-height:21px;letter-spacing:0.496px;color:#222;">Use tooltip function</span>
<span class="t " style="left:787.07px;top:601.00px;font-size:16.25px;line-height:20px;letter-spacing:0.403px;color:#7a7a7a;">Tooltip function: f(data, dsData, dsIndex)</span>
<div class="a" style="left:1718px;top:597.500px;width:42.800px;height:28.500px;border-radius:4px;background:#f0f0f0"></div>
<span class="t " style="left:1723.92px;top:602.00px;font-size:15px;line-height:18px;letter-spacing:1.490px;color:#787878;-webkit-text-stroke:.5px #787878;">Tidy</span>
<div class="a" style="left:1766px;top:592px;width:39.500px;height:39.500px;border-radius:50%;background:#f1f1f1"></div>
<div class="a" style="left:1811.500px;top:592.300px;width:39.500px;height:39.500px;border-radius:50%;background:#f1f1f1"></div>
<svg class="a" style="left:1771.20px;top:596.60px" width="30" height="30" viewBox="0 0 24 24" ><path fill="#00695c" d="M11 18h2v-2h-2v2zm1-16C6.48 2 2 6.48 2 12s4.48 10 10 10 10-4.48 10-10S17.52 2 12 2zm0 18c-4.410 0-8-3.590-8-8s3.590-8 8-8 8 3.590 8 8-3.590 8-8 8zm0-14c-2.210 0-4 1.790-4 4h2c0-1.1.9-2 2-2s2 .9 2 2c0 2-3 1.750-3 5h2c0-2.250 3-2.500 3-5 0-2.210-1.790-4-4-4z"/></svg>
<svg class="a" style="left:1816.30px;top:597.10px" width="30" height="30" viewBox="0 0 24 24" ><path fill="#5a5a5a" d="M7 14H5v5h5v-2H7v-3zm-2-4h2V7h3V5H5v5zm12 7h-3v2h5v-5h-2v3zM14 5v2h3v3h2V5h-5z"/></svg>
<div class="a hl" style="left:779.900px;top:596px;width:1078px;height:300px"></div>
<div class="a" style="left:787px;top:637.300px;width:1064px;height:251.500px;border:1px solid #c4c4c4;overflow:hidden;background:#fff">
<div class="a" style="left:0;top:0;width:61px;height:260px;background:#ebebeb"></div>
<div class="a" style="left:866px;top:0;width:1px;height:260px;background:#e8e8e8"></div>
<div class="a" style="left:1055.500px;top:0;width:7px;height:49.500px;background:#cfcfcf"></div>
<div class="a" style="left:105px;top:147px;width:0;height:20px;border-left:1px dotted #bbb"></div><div class="a" style="left:105px;top:187px;width:0;height:20px;border-left:1px dotted #bbb"></div>
<div class="t cd" style="left:65.9px;top:0.70px"><span style="color:#0000ff">let</span> tooltip <span style="color:#687687">=</span> <span style="color:#04720a">&#x27;&lt;h1 style=&quot;margin: 8px 0; width: 200px; border-bottom: 1px solid #0000000d;</span></div>
<div class="t cd" style="left:0;width:44.800px;text-align:right;top:0.70px;color:#333">1</div>
<div class="t cd" style="left:105.9px;top:20.70px"><span style="color:#04720a">padding-bottom: 8px; padding-right: 15px; font-size: 16px; font-weight: 600; line-height:</span></div>
<div class="t cd" style="left:105.9px;top:40.70px"><span style="color:#04720a">24px; top: 15px;&quot;&gt;${entityLabel}&lt;/h1&gt;&#x27;</span>;</div>
<div class="t cd" style="left:65.9px;top:60.70px"><span style="color:#0000ff">let</span> typeTooltip <span style="color:#687687">=</span> <span style="color:#04720a">&#x27;&#x27;</span>;</div>
<div class="t cd" style="left:0;width:44.800px;text-align:right;top:60.70px;color:#333">2</div>
<div class="t cd" style="left:65.9px;top:80.70px"><span style="color:#0000ff">if</span> (data.deviceType <span style="color:#687687">==</span> <span style="color:#04720a">&#x27;energy-sensor&#x27;</span>) {</div>
<div class="t cd" style="left:0;width:44.800px;text-align:right;top:80.70px;color:#333">3</div>
<div class="t cd" style="left:105.9px;top:100.70px">typeTooltip <span style="color:#687687">=</span> <span style="color:#04720a">&#x27;&lt;div style=&quot;display: flex; flex-direction: row; justify-content: space-between</span></div>
<div class="t cd" style="left:0;width:44.800px;text-align:right;top:100.70px;color:#333">4</div>
<div class="t cd" style="left:145.9px;top:120.70px"><span style="color:#04720a">;align-items: center; gap: 10px;&quot;&gt;&#x27;</span> <span style="color:#687687">+</span></div>
<div class="t cd" style="left:145.9px;top:140.70px"><span style="color:#04720a">&#x27;&lt;span style=&quot;font-weight: 600; font-size: 12px; line-height: 16px; color: #0000008a; max</span></div>
<div class="t cd" style="left:0;width:44.800px;text-align:right;top:140.70px;color:#333">5</div>
<div class="t cd" style="left:185.9px;top:160.70px"><span style="color:#04720a">-width: 90px;&quot;&gt;Power consumption: &lt;/span&gt;&#x27;</span> <span style="color:#687687">+</span></div>
<div class="t cd" style="left:145.9px;top:180.70px"><span style="color:#04720a">&#x27;&lt;span style=&quot;font-weight: 600; font-size: 13px; line-height: 20px; color: #000000de&quot;</span></div>
<div class="t cd" style="left:0;width:44.800px;text-align:right;top:180.70px;color:#333">6</div>
<div class="t cd" style="left:185.9px;top:200.70px"><span style="color:#04720a">&gt;${powerConsumption:1} kW&lt;/span&gt;&#x27;</span> <span style="color:#687687">+</span></div>
<div class="t cd" style="left:105.9px;top:220.70px"><span style="color:#04720a">&#x27;&lt;/div&gt;&#x27;</span>;</div>
<div class="t cd" style="left:0;width:44.800px;text-align:right;top:220.70px;color:#333">7</div>
<div class="t cd" style="left:105.9px;top:240.70px">typeTooltip <span style="color:#687687">+=</span> <span style="color:#04720a">&#x27;&lt;div style=&quot;margin-top: 17px; text-align: center; background: var(--tb</span></div>
<div class="t cd" style="left:0;width:44.800px;text-align:right;top:240.70px;color:#333">8</div>
<svg class="a" style="left:48px;top:86.4px" width="10" height="8"><path d="M1.500 2h6l-3 3.600z" fill="#777"/></svg>
</div>
<div class="a field" style="left:787px;top:907px;width:526.800px;height:69.500px"></div>
<span class="t " style="left:807.03px;top:917.00px;font-size:15px;line-height:18px;letter-spacing:0.557px;color:#6b7170;">Tooltip X offset relative to marker anchor multiplied by marker width</span>
<span class="t " style="left:807.44px;top:940.00px;font-size:19px;line-height:23px;color:#222;">0</span>
<div class="a field" style="left:1324px;top:907px;width:527px;height:69.500px"></div>
<div class="a hl" style="left:1321.300px;top:904px;width:532.500px;height:75.800px"></div>
<span class="t " style="left:1344.03px;top:917.00px;font-size:15px;line-height:18px;letter-spacing:0.552px;color:#6b7170;">Tooltip Y offset relative to marker anchor multiplied by marker height</span>
<span class="t " style="left:1343.35px;top:941.00px;font-size:19px;line-height:23px;letter-spacing:1.049px;color:#222;">-0.77</span>
<div class="a fs" style="left:766px;top:1040.700px;width:1106px;height:100px"></div>
<div class="a" style="left:787px;top:1034px;width:53px;height:14px;background:#fff"></div>
<span class="t " style="left:789.90px;top:1029.00px;font-size:20px;line-height:24px;letter-spacing:-0.149px;color:#3d3d3d;">Color</span>
<div class="a field" style="left:787px;top:1063px;width:1064px;height:60px"></div>
<svg class="a" style="left:838px;top:1070.500px" width="15" height="12" viewBox="0 0 15 12"><path d="M4.500 1.200l5.800 5.800-4.300 4.300-4.500-4.400z" fill="none" stroke="#6b6b6b" stroke-width="1.500"/><path d="M12.600 8.300c.9 1.300 1.300 2 1.300 2.600a1.300 1.300 0 0 1-2.600 0c0-.6.400-1.300 1.300-2.600z" fill="#6b6b6b"/><path d="M2 8h9l-4.500 4z" fill="#6b6b6b"/></svg>
<span class="t " style="left:856.93px;top:1072.00px;font-size:15px;line-height:18px;letter-spacing:0.448px;color:#6b7170;">Color</span>
<svg class="a" style="left:0;top:0" width="1920" height="1080"><path d="M715.700 566.500H781.500" stroke="#fec43c" stroke-width="3" stroke-dasharray="21 5.300" fill="none"/><circle cx="781.500" cy="566.500" r="5.200" fill="#fec43c"/><path d="M1419.400 977.800V1016" stroke="#fec43c" stroke-width="3" stroke-dasharray="11.900 5.300 21 5.300" fill="none"/><circle cx="1419.400" cy="977.800" r="5.300" fill="#fec43c"/></svg>
<div class="a badge" style="left:240.2px;top:513.1px;width:29.8px;height:35.9px;"></div>
<span class="t " style="left:246.39px;top:516.00px;font-size:26.8px;line-height:32px;color:#111;">4</span>
<div class="a note" style="left:221.2px;top:545.2px;width:507.8px;height:41.5px;"></div>
<span class="t " style="left:229.19px;top:551.00px;font-size:26.8px;line-height:32px;letter-spacing:0.533px;color:#111;">Turn on the &quot;Use tooltip function&quot; option</span>
<div class="a badge" style="left:306.0px;top:652.5px;width:29.6px;height:35.5px;"></div>
<span class="t " style="left:313.79px;top:655.00px;font-size:26.8px;line-height:32px;color:#111;">5</span>
<div class="a note" style="left:282.1px;top:684.0px;width:475.9px;height:76.0px;"></div>
<span class="t " style="left:290.39px;top:689.00px;font-size:26.8px;line-height:32px;letter-spacing:0.517px;color:#111;">Paste the tooltip function</span>
<span class="t " style="left:290.39px;top:723.00px;font-size:26.8px;line-height:32px;letter-spacing:0.551px;color:#111;">by copying it from the documentation</span>
<svg class="a" style="left:0;top:0" width="1920" height="1080"><g transform="translate(-1.200,1.400)"><path d="M757.800 722.200C766 721.500 776 723 788.500 730L787 722.600 790.400 717 804 746.300 801 751 775.600 743.300 777.400 738 782 736.300C774 731 766 728 757.800 727.200z" fill="#a8641c"/></g><path d="M757.800 722.200C766 721.500 776 723 788.500 730L787 722.600 790.400 717 804 746.300 801 751 775.600 743.300 777.400 738 782 736.300C774 731 766 728 757.800 727.200z" fill="#fdc93f"/></svg>
<div class="a badge" style="left:968.3px;top:967.2px;width:29.5px;height:35.8px;"></div>
<span class="t " style="left:975.09px;top:969.00px;font-size:26.8px;line-height:32px;color:#111;">6</span>
<div class="a note" style="left:945.0px;top:998.9px;width:617.1px;height:76.4px;"></div>
<span class="t " style="left:952.69px;top:1005.00px;font-size:26.8px;line-height:32px;letter-spacing:0.537px;color:#111;">Adjust the tooltip&#x27;s Y offset relative to the marker</span>
<span class="t " style="left:952.99px;top:1039.00px;font-size:26.8px;line-height:32px;letter-spacing:0.540px;color:#111;">to -0.77 for optimal positioning</span>
</body></html>
